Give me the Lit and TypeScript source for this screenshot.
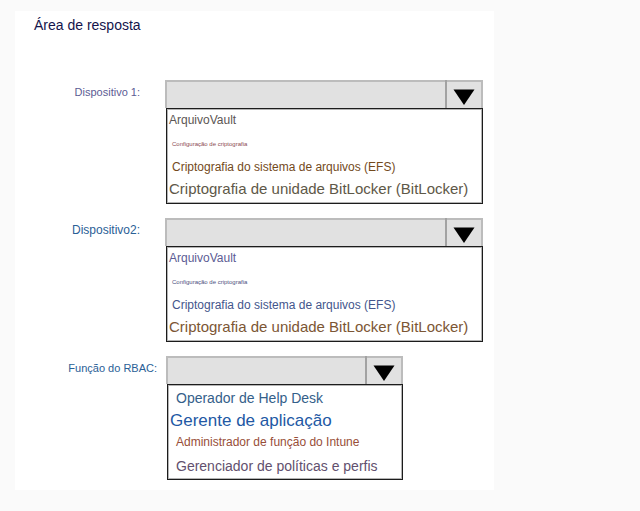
import { LitElement, html, css } from "lit";
import { customElement, property } from "lit/decorators.js";
import { classMap } from "lit/directives/class-map.js";

interface Option {
  text: string;
  look: string;
}

interface Question {
  id: string;
  label: string;
  tone: string;
  narrow?: boolean;
  options: Option[];
}

const QUESTIONS: Question[] = [
  {
    id: "device1",
    label: "Dispositivo 1:",
    tone: "small violet",
    options: [
      { text: "ArquivoVault", look: "h22 s12 gray" },
      { text: "Configuração de criptografia", look: "h26 s6 in-md wine" },
      { text: "Criptografia do sistema de arquivos (EFS)", look: "h20 s12 in-md brown" },
      { text: "Criptografia de unidade BitLocker (BitLocker)", look: "h24 s15 olive" },
    ],
  },
  {
    id: "device2",
    label: "Dispositivo2:",
    tone: "blue",
    options: [
      { text: "ArquivoVault", look: "h22 s12 violet" },
      { text: "Configuração de criptografia", look: "h26 s6 in-md slate" },
      { text: "Criptografia do sistema de arquivos (EFS)", look: "h20 s12 in-md indigo" },
      { text: "Criptografia de unidade BitLocker (BitLocker)", look: "h24 s15 tan" },
    ],
  },
  {
    id: "role",
    label: "Função do RBAC:",
    tone: "small blue wide",
    narrow: true,
    options: [
      { text: "Operador de Help Desk", look: "h26 s14 in-lg steel" },
      { text: "Gerente de aplicação", look: "h20 s17 royal" },
      { text: "Administrador de função do Intune", look: "h22 s12 in-lg rust" },
      { text: "Gerenciador de políticas e perfis", look: "h26 s14 in-lg plum" },
    ],
  },
];

const classes = (names: string) =>
  classMap(Object.fromEntries(names.split(" ").map((n) => [n, true])));

@customElement("answer-dropdown")
export class AnswerDropdown extends LitElement {
  @property({ attribute: false }) question!: Question;

  static styles = css`
    :host {
      display: grid;
      grid-template-columns: 150px minmax(0, 1fr);
    }
    label {
      justify-self: end;
      padding: 4px 25px 0 0;
      font-size: 12px;
      line-height: 16px;
      white-space: nowrap;
    }
    label.small { font-size: 11px; }
    label.wide { padding-right: 8px; }
    .field { max-width: 318px; }
    .field.narrow { max-width: 237px; margin-left: 1px; }
    .head { display: grid; }
    select, .arrow { grid-area: 1 / 1; }
    select {
      appearance: none;
      box-sizing: border-box;
      width: 100%;
      height: 28px;
      margin: 0;
      padding: 0 40px 0 4px;
      border: 2px solid #bcbcbc;
      border-bottom: 0;
      border-radius: 0;
      background: #e1e1e1;
      font: 12px "Liberation Sans", Arial, sans-serif;
    }
    .arrow {
      justify-self: end;
      display: flex;
      align-items: center;
      justify-content: center;
      box-sizing: border-box;
      width: 38px;
      height: 28px;
      padding: 6px 2px 0 0;
      border-left: 2px solid #a2a2a2;
      pointer-events: none;
    }
    ul {
      box-sizing: border-box;
      height: 96px;
      margin: 0 0 0 1px;
      padding: 0 0 0 2px;
      border: 1px solid #1c1c1c;
      box-shadow: inset 0 0 0 1px #b4b4b4;
      background: #fff;
      list-style: none;
    }
    li { white-space: nowrap; }
    .h20 { line-height: 20px; }
    .h22 { line-height: 22px; }
    .h24 { line-height: 24px; }
    .h26 { line-height: 26px; }
    .s6 { font-size: 6px; }
    .s12 { font-size: 12px; }
    .s14 { font-size: 14px; }
    .s15 { font-size: 15px; }
    .s17 { font-size: 17px; }
    .in-md { padding-left: 3px; }
    .in-lg { padding-left: 6px; }
    .gray { color: #5c5654; }
    .wine { color: #8a4a52; }
    .brown { color: #734a1c; }
    .olive { color: #5e5848; }
    .violet { color: #5c5c94; }
    .slate { color: #4c5080; }
    .indigo { color: #44568c; }
    .tan { color: #7c5634; }
    .blue { color: #2a6096; }
    .steel { color: #34608a; }
    .royal { color: #2258a4; }
    .rust { color: #984e38; }
    .plum { color: #62506e; }
  `;

  render() {
    const q = this.question;
    return html`
      <label for=${q.id} class=${classes(q.tone)}>${q.label}</label>
      <div class=${classMap({ field: true, narrow: !!q.narrow })}>
        <div class="head">
          <select id=${q.id}>
            <option value="" selected></option>
            ${q.options.map((o) => html`<option>${o.text}</option>`)}
          </select>
          <span class="arrow">
            <svg width="22" height="16" viewBox="0 0 22 16" aria-hidden="true">
              <path d="M0.5 0.5H21.5L11 16Z" fill="#000" />
            </svg>
          </span>
        </div>
        <ul role="listbox" aria-label=${q.label}>
          ${q.options.map(
            (o) => html`<li role="option" class=${classes(o.look)}>${o.text}</li>`
          )}
        </ul>
      </div>
    `;
  }
}

@customElement("app-root")
export class AppRoot extends LitElement {
  static styles = css`
    :host {
      display: block;
      box-sizing: border-box;
      min-height: 100vh;
      padding: 11px 15px 21px;
      background: #fafafa;
      font-family: "Liberation Sans", Arial, sans-serif;
    }
    main {
      box-sizing: border-box;
      max-width: 479px;
      padding: 4px 0 10px;
      background: #fff;
    }
    h1 {
      margin: 0 0 45px;
      padding-left: 19px;
      font-size: 14px;
      font-weight: 400;
      line-height: 20px;
      color: #14144c;
    }
    .questions {
      display: flex;
      flex-direction: column;
      gap: 14px;
    }
  `;

  render() {
    return html`
      <main>
        <h1>Área de resposta</h1>
        <div class="questions">
          ${QUESTIONS.map(
            (q) => html`<answer-dropdown .question=${q}></answer-dropdown>`
          )}
        </div>
      </main>
    `;
  }
}
